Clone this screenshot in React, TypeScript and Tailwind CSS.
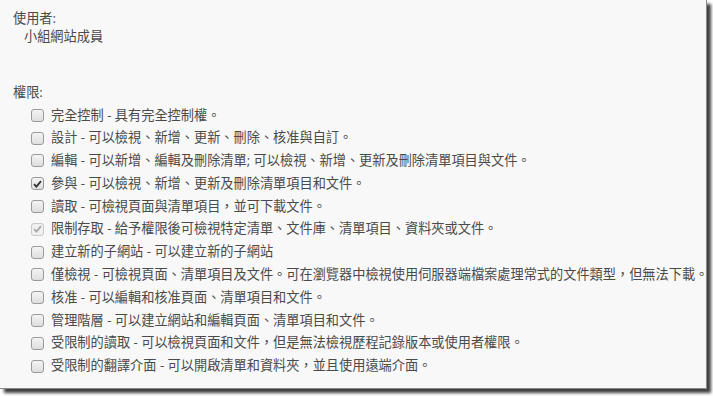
const permissions: { label: string; desc: string; state?: "checked" | "disabled" }[] = [
  { label: "完全控制", desc: "具有完全控制權。" },
  { label: "設計", desc: "可以檢視、新增、更新、刪除、核准與自訂。" },
  { label: "編輯", desc: "可以新增、編輯及刪除清單; 可以檢視、新增、更新及刪除清單項目與文件。" },
  { label: "參與", desc: "可以檢視、新增、更新及刪除清單項目和文件。", state: "checked" },
  { label: "讀取", desc: "可檢視頁面與清單項目，並可下載文件。" },
  { label: "限制存取", desc: "給予權限後可檢視特定清單、文件庫、清單項目、資料夾或文件。", state: "disabled" },
  { label: "建立新的子網站", desc: "可以建立新的子網站" },
  {
    label: "僅檢視",
    desc: "可檢視頁面、清單項目及文件。可在瀏覽器中檢視使用伺服器端檔案處理常式的文件類型，但無法下載。",
  },
  { label: "核准", desc: "可以編輯和核准頁面、清單項目和文件。" },
  { label: "管理階層", desc: "可以建立網站和編輯頁面、清單項目和文件。" },
  { label: "受限制的讀取", desc: "可以檢視頁面和文件，但是無法檢視歷程記錄版本或使用者權限。" },
  { label: "受限制的翻譯介面", desc: "可以開啟清單和資料夾，並且使用遠端介面。" },
];

function Checkbox({ state }: { state?: "checked" | "disabled" }) {
  const disabled = state === "disabled";
  return (
    <span
      className={`shrink-0 flex items-center justify-center w-[13px] h-[13px] rounded-[3px] border ${
        disabled ? "border-[#c8c8c8] bg-[#f0f0f0]" : "border-[#9a9a9a] bg-gradient-to-b from-[#f4f4f4] to-[#dedede]"
      }`}
    >
      {state && (
        <svg width="9" height="8" viewBox="0 0 9 8">
          <path
            d="M1 4.2 L3.4 6.6 L8 1.2"
            fill="none"
            stroke={disabled ? "#a8a8a8" : "#333"}
            strokeWidth="1.8"
          />
        </svg>
      )}
    </span>
  );
}

export default function App() {
  return (
    <div className="w-[713px] h-[396px] bg-white overflow-hidden">
      <div
        className="w-[707px] h-[389px] bg-[#f8f8f8] border-r border-b border-[#8a8a8a] shadow-[4px_4px_3px_rgba(0,0,0,0.75)] text-[13.2px] text-[#4a4a4a]"
        style={{ fontFamily: '"Open Sans", "Noto Sans CJK TC", sans-serif' }}
      >
        <div className="pt-[9px] pl-[13px]">
          <div className="h-[18px] leading-[18px]">使用者:</div>
          <div className="h-[18px] leading-[18px] pl-[11px]">小組網站成員</div>
          <div className="h-[37px]" />
          <div className="h-[20px] leading-[20px]">權限:</div>
          <div className="pl-[18px] mt-[2px] flex flex-col">
            {permissions.map((p) => (
              <div key={p.label} className="h-[22.8px] flex items-center gap-[7px]">
                <Checkbox state={p.state} />
                <span className="whitespace-nowrap">
                  {p.label} - {p.desc}
                </span>
              </div>
            ))}
          </div>
        </div>
      </div>
    </div>
  );
}
